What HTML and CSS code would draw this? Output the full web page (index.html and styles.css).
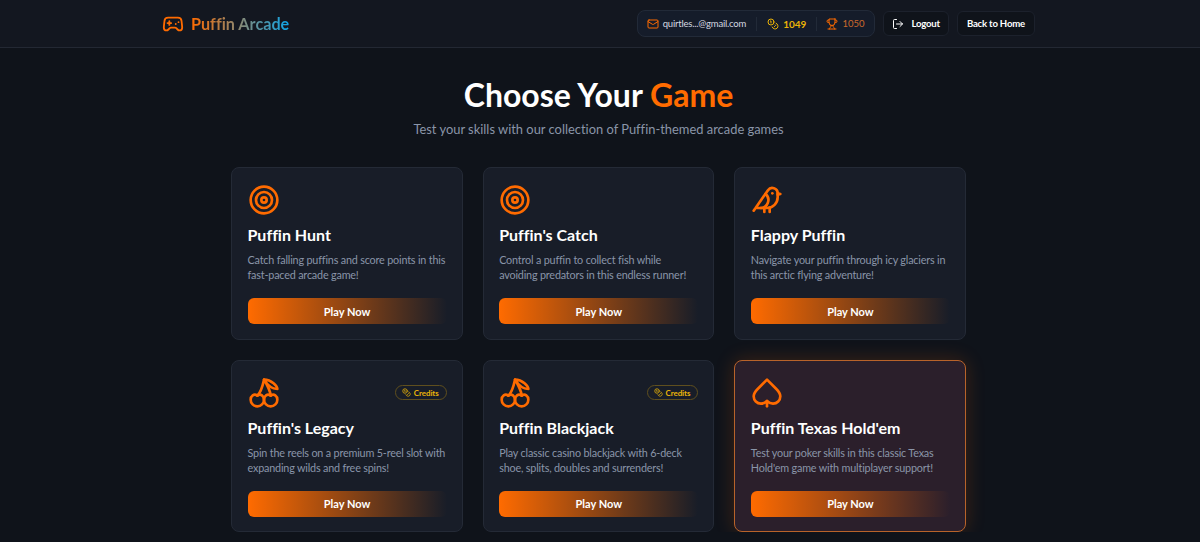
FILE: index.html
```html
<!DOCTYPE html>
<html lang="en">
<head>
    <meta charset="UTF-8">
    <meta name="viewport" content="width=device-width, initial-scale=1.0">
    <title>Puffin Arcade</title>
    <link rel="stylesheet" href="styles.css">
</head>
<body>
    <!-- Icon set -->
    <svg class="icon-defs" xmlns="http://www.w3.org/2000/svg">
        <symbol id="i-gamepad" viewBox="0 0 24 24"><path d="M6 11h4M8 9v4M15 12h.01M18 10h.01"/><path d="M17.32 5H6.68a4 4 0 0 0-3.978 3.59c-.006.052-.01.101-.017.152C2.604 9.416 2 14.456 2 16a3 3 0 0 0 3 3c1 0 1.5-.5 2-1l1.414-1.414A2 2 0 0 1 9.828 16h4.344a2 2 0 0 1 1.414.586L17 18c.5.5 1 1 2 1a3 3 0 0 0 3-3c0-1.545-.604-6.584-.685-7.258-.007-.05-.011-.1-.017-.151A4 4 0 0 0 17.32 5z"/></symbol>
        <symbol id="i-mail" viewBox="0 0 24 24"><rect x="2" y="4" width="20" height="16" rx="2"/><path d="m22 7-8.97 5.7a1.94 1.94 0 0 1-2.06 0L2 7"/></symbol>
        <symbol id="i-coins" viewBox="0 0 24 24"><circle cx="8" cy="8" r="6"/><path d="M18.09 10.37A6 6 0 1 1 10.34 18"/><path d="M7 6h1v4"/><path d="m16.71 13.88.7.71-2.82 2.82"/></symbol>
        <symbol id="i-trophy" viewBox="0 0 24 24"><path d="M6 9H4.5a2.5 2.5 0 0 1 0-5H6"/><path d="M18 9h1.5a2.5 2.5 0 0 0 0-5H18"/><path d="M4 22h16"/><path d="M10 14.66V17c0 .55-.47.98-.97 1.21C7.85 18.75 7 20.24 7 22"/><path d="M14 14.66V17c0 .55.47.98.97 1.21C16.15 18.75 17 20.24 17 22"/><path d="M18 2H6v7a6 6 0 0 0 12 0V2Z"/></symbol>
        <symbol id="i-logout" viewBox="0 0 24 24"><path d="M9 21H5a2 2 0 0 1-2-2V5a2 2 0 0 1 2-2h4"/><path d="m16 17 5-5-5-5"/><path d="M21 12H9"/></symbol>
        <symbol id="i-target" viewBox="0 0 24 24"><circle cx="12" cy="12" r="10"/><circle cx="12" cy="12" r="6"/><circle cx="12" cy="12" r="2"/></symbol>
        <symbol id="i-bird" viewBox="0 0 24 24"><path d="M16 7h.01"/><path d="M3.4 18H12a8 8 0 0 0 8-8V7a4 4 0 0 0-7.28-2.3L2 20"/><path d="m20 7 2 .5-2 .5"/><path d="M10 18v3"/><path d="M14 17.75V21"/><path d="M7 18a6 6 0 0 0 3.84-10.61"/></symbol>
        <symbol id="i-cherry" viewBox="0 0 24 24"><path d="M2 17a5 5 0 0 0 10 0c0-2.76-2.5-5-5-3-2.5-2-5 .24-5 3Z"/><path d="M12 17a5 5 0 0 0 10 0c0-2.76-2.5-5-5-3-2.5-2-5 .24-5 3Z"/><path d="M7 14c3.22-2.91 4.29-8.75 5-12 1.66 2.38 4.94 9 5 12"/><path d="M22 9c-4.29 0-7.14-2.33-10-7 5.71 0 10 4.67 10 7Z"/></symbol>
        <symbol id="i-spade" viewBox="0 0 24 24"><path d="M5 9c-1.5 1.5-3 3.2-3 5.5A5.5 5.5 0 0 0 7.5 20c1.8 0 3-.5 4.5-2 1.5 1.5 2.7 2 4.5 2a5.5 5.5 0 0 0 5.5-5.5c0-2.3-1.5-4-3-5.5l-7-7-7 7Z"/><path d="M12 18v4"/></symbol>
    </svg>

    <header class="topbar">
        <div class="topbar-inner">
            <a class="logo">
                <svg class="icon logo-icon"><use href="#i-gamepad"/></svg>
                <span class="logo-text">Puffin Arcade</span>
            </a>
            <div class="topbar-right">
                <div class="stats">
                    <div class="stat">
                        <svg class="icon stat-icon orange"><use href="#i-mail"/></svg>
                        <span class="stat-email">quirtles...@gmail.com</span>
                    </div>
                    <div class="stat stat-line">
                        <svg class="icon stat-icon yellow"><use href="#i-coins"/></svg>
                        <span class="stat-credits">1049</span>
                    </div>
                    <div class="stat stat-line">
                        <svg class="icon stat-icon orange"><use href="#i-trophy"/></svg>
                        <span class="stat-score">1050</span>
                    </div>
                </div>
                <button class="nav-btn logout">
                    <svg class="icon stat-icon"><use href="#i-logout"/></svg>
                    Logout
                </button>
                <button class="nav-btn">Back to Home</button>
            </div>
        </div>
    </header>

    <main class="content">
        <h1>Choose Your <span class="accent">Game</span></h1>
        <p class="subtitle">Test your skills with our collection of Puffin-themed arcade games</p>

        <div class="games">
            <div class="card">
                <div class="card-top"><svg class="icon card-icon"><use href="#i-target"/></svg></div>
                <h2>Puffin Hunt</h2>
                <p>Catch falling puffins and score points in this fast-paced arcade game!</p>
                <button class="play">Play Now</button>
            </div>
            <div class="card">
                <div class="card-top"><svg class="icon card-icon"><use href="#i-target"/></svg></div>
                <h2>Puffin's Catch</h2>
                <p>Control a puffin to collect fish while avoiding predators in this endless runner!</p>
                <button class="play">Play Now</button>
            </div>
            <div class="card">
                <div class="card-top"><svg class="icon card-icon"><use href="#i-bird"/></svg></div>
                <h2>Flappy Puffin</h2>
                <p>Navigate your puffin through icy glaciers in this arctic flying adventure!</p>
                <button class="play">Play Now</button>
            </div>
            <div class="card">
                <div class="card-top">
                    <svg class="icon card-icon"><use href="#i-cherry"/></svg>
                    <span class="badge"><svg class="icon badge-icon"><use href="#i-coins"/></svg>Credits</span>
                </div>
                <h2>Puffin's Legacy</h2>
                <p>Spin the reels on a premium 5-reel slot with expanding wilds and free spins!</p>
                <button class="play">Play Now</button>
            </div>
            <div class="card">
                <div class="card-top">
                    <svg class="icon card-icon"><use href="#i-cherry"/></svg>
                    <span class="badge"><svg class="icon badge-icon"><use href="#i-coins"/></svg>Credits</span>
                </div>
                <h2>Puffin Blackjack</h2>
                <p>Play classic casino blackjack with 6-deck shoe, splits, doubles and surrenders!</p>
                <button class="play">Play Now</button>
            </div>
            <div class="card card-hot">
                <div class="card-top"><svg class="icon card-icon"><use href="#i-spade"/></svg></div>
                <h2>Puffin Texas Hold'em</h2>
                <p>Test your poker skills in this classic Texas Hold'em game with multiplayer support!</p>
                <button class="play">Play Now</button>
            </div>
        </div>
    </main>
</body>
</html>
```

FILE: styles.css
```css
* {
    margin: 0;
    padding: 0;
    box-sizing: border-box;
}

body {
    font-family: Lato, "Noto Sans", sans-serif;
    font-variant-ligatures: none;
    background-color: #0f131a;
    color: #fff;
    overflow: hidden;
}

.icon-defs {
    display: none;
}

.icon {
    display: block;
    fill: none;
    stroke: currentColor;
    stroke-width: 2;
    stroke-linecap: round;
    stroke-linejoin: round;
    flex-shrink: 0;
}

.orange {
    color: #ff6b00;
}

.yellow {
    color: #eab308;
}

/* Header */
.topbar {
    height: 48px;
    background-color: #131720;
    border-bottom: 1px solid #232833;
}

.topbar-inner {
    width: 873px;
    height: 47px;
    margin-left: 162px;
    display: flex;
    align-items: center;
    justify-content: space-between;
}

.logo {
    display: flex;
    align-items: center;
    gap: 7px;
}

.logo-icon {
    width: 22px;
    height: 22px;
    color: #ff6b00;
}

.logo-text {
    font-size: 16.2px;
    font-weight: 700;
    background: linear-gradient(90deg, #ff6b00, #0ea5e9);
    -webkit-background-clip: text;
    background-clip: text;
    color: transparent;
}

.topbar-right {
    display: flex;
    align-items: center;
    gap: 8px;
}

.stats {
    display: flex;
    align-items: center;
    height: 27px;
    padding: 0 10px 0 9px;
    background-color: #151c2a;
    border: 1px solid #222a38;
    border-radius: 8px;
}

.stat {
    display: flex;
    align-items: center;
    gap: 4px;
}

.stat-line {
    margin-left: 10px;
    padding-left: 10px;
    border-left: 1px solid #222a38;
    height: 14px;
}

.stat-line:last-child {
    padding-left: 9px;
}

.stat-icon {
    width: 12px;
    height: 12px;
}

.stat-email {
    font-size: 9.5px;
    letter-spacing: -0.2px;
    color: #d4d8e0;
}

.stat-credits {
    font-size: 10px;
    font-weight: 700;
    color: #eab308;
}

.stat-score {
    font-size: 9.5px;
    color: #cc6a2c;
}

.nav-btn {
    display: flex;
    align-items: center;
    height: 25px;
    padding: 0 9px;
    font-family: inherit;
    font-size: 9.6px;
    font-weight: 700;
    letter-spacing: -0.2px;
    color: #fff;
    background-color: #0f131a;
    border: 1px solid #1c212c;
    border-radius: 6px;
}

.logout {
    gap: 7px;
    padding: 0 8px;
}

/* Main */
.content {
    width: 735px;
    margin-left: 231px;
    padding-top: 23px;
}

h1 {
    font-size: 32px;
    line-height: 48px;
    font-weight: 700;
    text-align: center;
}

.accent {
    color: #ff6b00;
}

.subtitle {
    margin-top: 1px;
    font-size: 12.9px;
    line-height: 18px;
    text-align: center;
    color: #8a95a8;
}

.games {
    display: grid;
    grid-template-columns: repeat(3, 1fr);
    gap: 20px;
    margin-top: 29px;
}

.card {
    height: 172.5px;
    padding: 16px 15px 16px 15.5px;
    background-color: #181d28;
    border: 1px solid #242a36;
    border-radius: 8px;
}

.card-hot {
    background-color: #2b1f2b;
    border-color: #b8632a;
    box-shadow: 0 0 20px rgba(255, 107, 0, 0.2);
}

.card-top {
    display: flex;
    align-items: center;
    justify-content: space-between;
    height: 32px;
    margin-bottom: 7px;
}

.card-icon {
    width: 32px;
    height: 32px;
    color: #ff6b00;
}

.badge {
    display: flex;
    align-items: center;
    gap: 3px;
    height: 15px;
    padding: 0 7px 0 6px;
    font-size: 8px;
    font-weight: 700;
    letter-spacing: -0.1px;
    color: #eab308;
    border: 1px solid #5f4f1e;
    border-radius: 8px;
}

.badge-icon {
    width: 9px;
    height: 9px;
}

.card h2 {
    font-size: 16px;
    line-height: 24px;
    font-weight: 700;
}

.card p {
    margin-top: 5px;
    font-size: 10.8px;
    line-height: 15px;
    letter-spacing: -0.18px;
    color: #8a95a8;
}

.play {
    display: block;
    width: 100%;
    height: 26px;
    margin-top: 16px;
    font-family: inherit;
    font-size: 11px;
    font-weight: 700;
    color: #fff;
    background: linear-gradient(90deg, #ff6b00, transparent);
    border: none;
    border-radius: 6px;
}
```
